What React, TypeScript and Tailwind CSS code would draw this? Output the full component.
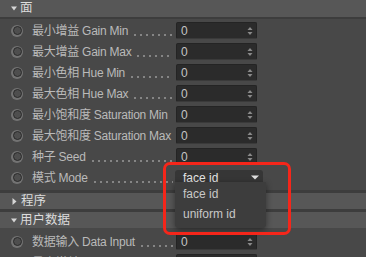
import React from 'react';

const font = '"Liberation Sans", "Noto Sans CJK SC", sans-serif';

const rows = [
  '最小增益 Gain Min',
  '最大增益 Gain Max',
  '最小色相 Hue Min',
  '最大色相 Hue Max',
  '最小饱和度 Saturation Min',
  '最大饱和度 Saturation Max',
  '种子 Seed',
];

function Radio() {
  return (
    <div className="w-[12px] h-[12px] rounded-full bg-[#737373] flex items-center justify-center shrink-0">
      <div className="w-[9px] h-[9px] rounded-full bg-[#4e4e4e] border border-[#2a2a2a]" />
    </div>
  );
}

function Label({ text }: { text: string }) {
  return (
    <div className="w-[144px] shrink-0 flex items-center whitespace-nowrap text-[12px] tracking-[-0.25px] text-[#bababa]">
      <span className="shrink-0">{text}</span>
      {/* dotted leader */}
      <div className="flex-1 min-w-0 h-[2px] mt-[8px] ml-[4px] mr-[3px] bg-[radial-gradient(circle,#9c9c9c_0.6px,transparent_1px)] bg-[length:6px_2px] bg-repeat-x" />
    </div>
  );
}

function NumberInput() {
  return (
    <div className="w-[81px] h-[17px] shrink-0 bg-[#2b2b2b] border border-[#242424] border-b-[#3a3a3a] rounded-[2px] flex items-center justify-between pl-[4px] pr-[3px]">
      <span className="text-[12px] text-[#c4c4c4] leading-none">0</span>
      <svg width="6" height="10" viewBox="0 0 6 10">
        <path d="M3 1 L5.5 4 L0.5 4 Z" fill="#8a8a8a" />
        <path d="M3 9 L5.5 6 L0.5 6 Z" fill="#8a8a8a" />
      </svg>
    </div>
  );
}

function Row({ text, children }: { text: string; children?: React.ReactNode }) {
  return (
    <div className="h-[21px] flex items-center pl-[11px]">
      <Radio />
      <div className="ml-[9px] shrink-0">
        <Label text={text} />
      </div>
      {children ?? <NumberInput />}
    </div>
  );
}

function Header({ title, open, top = true }: { title: string; open: boolean; top?: boolean }) {
  return (
    <div
      className={`h-[19px] bg-[#575757] border-[#3d3d3d] flex items-center pl-[11px] text-[12.5px] text-[#dcdcdc] ${
        top ? 'border-t-[3px]' : 'h-[17px] border-b-2'
      }`}
    >
      {open ? (
        <svg width="6" height="5" viewBox="0 0 6 5" className="mr-[3px]">
          <path d="M0 0.5 L6 0.5 L3 4.5 Z" fill="#d6d6d6" />
        </svg>
      ) : (
        <svg width="6" height="7" viewBox="0 0 6 7" className="mr-[3px] ml-[1px]">
          <path d="M0.5 0 L4.5 3.5 L0.5 7 Z" fill="#d6d6d6" />
        </svg>
      )}
      <span>{title}</span>
    </div>
  );
}

export default function App() {
  return (
    <div className="relative w-[366px] h-[257px] overflow-hidden bg-[#484848]" style={{ fontFamily: font }}>
      <Header title="面" open top={false} />
      <div className="pt-[1px] pb-[2px]">
        {rows.map((r) => (
          <Row key={r} text={r} />
        ))}
        <Row text="模式 Mode">
          <div className="-ml-[1px] w-[88px] h-[16px] bg-[#363636] rounded-[3px] flex items-center justify-between pl-[8px] pr-[4px]">
            <span className="text-[12px] text-[#e4e4e4] leading-none">face id</span>
            <svg width="8" height="5" viewBox="0 0 8 5">
              <path d="M0 0.5 L8 0.5 L4 4.5 Z" fill="#dedede" />
            </svg>
          </div>
        </Row>
      </div>
      <Header title="程序" open={false} />
      <Header title="用户数据" open />
      <div className="pt-[3px]">
        <Row text="数据输入 Data Input" />
        <Row text="最小增益 Gain Min" />
      </div>

      {/* dropdown menu */}
      <div className="absolute left-[175px] top-[182px] w-[91px] h-[46px] bg-[#3d3d3d] rounded-b-[4px] shadow-[0_2px_6px_rgba(0,0,0,0.45)] pt-[2px] text-[12px] text-[#c8c8c8]">
        <div className="h-[20px] flex items-center pl-[8px]">face id</div>
        <div className="h-[20px] flex items-center pl-[8px]">uniform id</div>
      </div>

      {/* highlight */}
      <div className="absolute left-[163px] top-[162px] w-[128px] h-[73px] border-[3px] border-[#f5261a] rounded-[7px]" />
    </div>
  );
}
